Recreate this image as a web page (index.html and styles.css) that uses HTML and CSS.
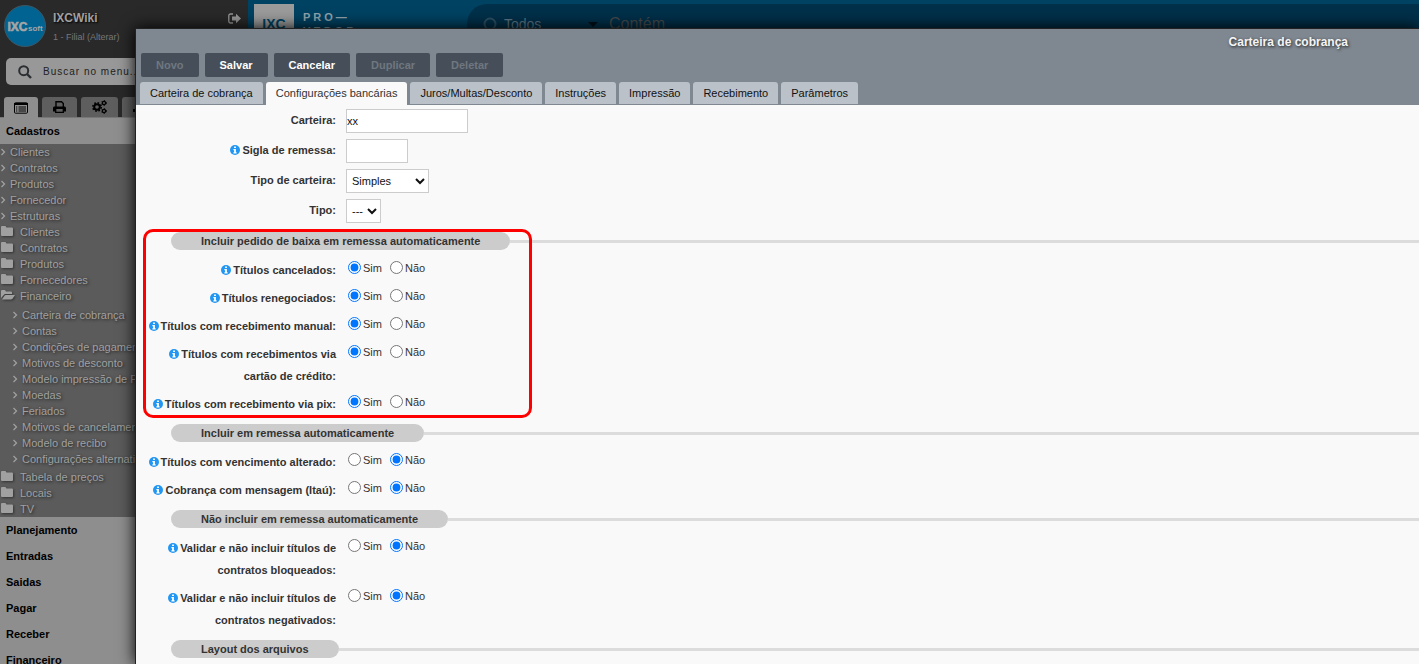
FILE: index.html
```
<!DOCTYPE html>
<html lang="pt-BR">
<head>
<meta charset="utf-8">
<title>Carteira de cobrança</title>
<link rel="stylesheet" href="styles.css">
</head>
<body>
<svg class="sprite" aria-hidden="true">
  <symbol id="chevron" viewBox="0 0 6 8"><path d="M1.5 1l3 3-3 3" fill="none" stroke="currentColor" stroke-width="1.3"/></symbol>
  <symbol id="folder" viewBox="0 0 12 10"><path d="M1 0h3.5l1 1.5H11a1 1 0 0 1 1 1V9a1 1 0 0 1-1 1H1a1 1 0 0 1-1-1V1a1 1 0 0 1 1-1z" fill="currentColor"/></symbol>
  <symbol id="folder-open" viewBox="0 0 14 10"><path d="M0 8V1a1 1 0 0 1 1-1h3l1 1.4h5a1 1 0 0 1 1 1V4H4.5a2 2 0 0 0-1.7.9zM1 9.6L3.3 6a2 2 0 0 1 1.6-1H14l-2.5 3.8a2 2 0 0 1-1.6.8z" fill="currentColor"/></symbol>
  <symbol id="info" viewBox="0 0 10 10"><circle cx="5" cy="5" r="5" fill="#2196f3"/><path d="M4.1 1.4h1.8v1.5H4.1zM3.4 4h2.5v3.2h.7v1.2H3.4V7.2h.7v-2h-.7z" fill="#fff"/></symbol>
</svg>
<div class="app">
  <aside class="sidebar">
    <div class="user">
      <svg class="avatar" viewBox="0 0 42 42" role="img" aria-label="IXCsoft"><circle cx="21" cy="21" r="20.5" fill="#006391" stroke="#3c5766"/><text x="3.500" y="26" class="avatar-main">IXC</text><text x="24" y="26" class="avatar-sub">soft</text></svg>
      <div class="user-text"><strong>IXCWiki</strong><a href="#">1 - Filial (Alterar)</a></div>
      <button class="logout" aria-label="Sair"><svg viewBox="0 0 13 11"><path d="M5 1H2.5A1.7 1.7 0 0 0 .8 2.7v5.6A1.7 1.7 0 0 0 2.500 10H5" fill="none" stroke="currentColor" stroke-width="1.3"/><path d="M4 3.600h4V.8l5 4.700-5 4.700V7.400H4z" fill="currentColor"/></svg></button>
    </div>
    <label class="menu-search">
      <svg viewBox="0 0 14 14"><circle cx="5.700" cy="5.700" r="4.500" fill="none" stroke="#2b2f33" stroke-width="2"/><path d="M9 9l4 4" stroke="#2b2f33" stroke-width="2.400"/></svg>
      <input type="text" aria-label="Buscar no menu" placeholder="Buscar no menu...">
    </label>
    <div class="side-tabs">
      <button class="side-tab side-tab-on" aria-label="Menu"><svg viewBox="0 0 14 12"><rect x=".5" y=".8" width="13" height="10.400" rx="1" fill="none" stroke="#000"/><path d="M0 1h14v2H0zM2 4.500h1.300v1H2zM4.500 4.500H12v1H4.500zM2 6.500h1.300v1H2zM4.500 6.500H12v1H4.500zM2 8.500h1.300v1H2zM4.500 8.500H12v1H4.500z"/></svg></button>
      <button class="side-tab" aria-label="Imprimir"><svg class="printer" viewBox="0 0 14 12"><path d="M3.500 6V.7h5.500l1.800 1.800V6" fill="none" stroke="#000" stroke-width="1.400"/><path d="M1.800 5.500h10.400A1.500 1.500 0 0 1 13.500 7v3.500H11V8H3v2.500H.5V7a1.500 1.500 0 0 1 1.300-1.500z"/><path d="M3.200 8v3.300h7.600V8" fill="none" stroke="#000" stroke-width="1.300"/></svg></button>
      <button class="side-tab" aria-label="Configurações"><svg class="gears" viewBox="0 0 15 14"><g fill="none" stroke="#000"><circle cx="5" cy="7" r="2.800" stroke-width="2"/><circle cx="5" cy="7" r="4.200" stroke-width="1.600" stroke-dasharray="1.700 1.600"/><circle cx="12" cy="3" r="1.600" stroke-width="1.200"/><circle cx="12" cy="3" r="2.400" stroke-width="1" stroke-dasharray="1.200 1.310"/><circle cx="12" cy="11" r="1.600" stroke-width="1.200"/><circle cx="12" cy="11" r="2.400" stroke-width="1" stroke-dasharray="1.200 1.310"/></g></svg></button>
      <button class="side-tab" aria-label="Gráficos"><svg viewBox="0 0 14 12"><path d="M1 11V8h2v3zM5 11V5h2v6zM9 11V2h2v9z"/></svg></button>
    </div>
    <nav class="menu">
      <h2>Cadastros</h2>
      <ul class="tree">
        <li><a href="#"><svg class="chev"><use href="#chevron"/></svg>Clientes</a></li>
        <li><a href="#"><svg class="chev"><use href="#chevron"/></svg>Contratos</a></li>
        <li><a href="#"><svg class="chev"><use href="#chevron"/></svg>Produtos</a></li>
        <li><a href="#"><svg class="chev"><use href="#chevron"/></svg>Fornecedor</a></li>
        <li><a href="#"><svg class="chev"><use href="#chevron"/></svg>Estruturas</a></li>
        <li><a href="#"><svg class="fold"><use href="#folder"/></svg>Clientes</a></li>
        <li><a href="#"><svg class="fold"><use href="#folder"/></svg>Contratos</a></li>
        <li><a href="#"><svg class="fold"><use href="#folder"/></svg>Produtos</a></li>
        <li><a href="#"><svg class="fold"><use href="#folder"/></svg>Fornecedores</a></li>
        <li><a href="#"><svg class="fold fold-open"><use href="#folder-open"/></svg>Financeiro</a>
          <ul class="subtree">
            <li><a href="#"><svg class="chev"><use href="#chevron"/></svg>Carteira de cobrança</a></li>
            <li><a href="#"><svg class="chev"><use href="#chevron"/></svg>Contas</a></li>
            <li><a href="#"><svg class="chev"><use href="#chevron"/></svg>Condições de pagamento</a></li>
            <li><a href="#"><svg class="chev"><use href="#chevron"/></svg>Motivos de desconto</a></li>
            <li><a href="#"><svg class="chev"><use href="#chevron"/></svg>Modelo impressão de Fatura</a></li>
            <li><a href="#"><svg class="chev"><use href="#chevron"/></svg>Moedas</a></li>
            <li><a href="#"><svg class="chev"><use href="#chevron"/></svg>Feriados</a></li>
            <li><a href="#"><svg class="chev"><use href="#chevron"/></svg>Motivos de cancelamento</a></li>
            <li><a href="#"><svg class="chev"><use href="#chevron"/></svg>Modelo de recibo</a></li>
            <li><a href="#"><svg class="chev"><use href="#chevron"/></svg>Configurações alternativas</a></li>
          </ul>
        </li>
        <li><a href="#"><svg class="fold"><use href="#folder"/></svg>Tabela de preços</a></li>
        <li><a href="#"><svg class="fold"><use href="#folder"/></svg>Locais</a></li>
        <li><a href="#"><svg class="fold"><use href="#folder"/></svg>TV</a></li>
      </ul>
      <h2>Planejamento</h2>
      <h2>Entradas</h2>
      <h2>Saidas</h2>
      <h2>Pagar</h2>
      <h2>Receber</h2>
      <h2>Financeiro</h2>
    </nav>
  </aside>
  <header class="topbar">
    <div class="brand-box">IXC</div>
    <div class="brand-name">PRO—<br>VEDOR</div>
    <div class="top-search">
      <svg class="ring" viewBox="0 0 14 14"><circle cx="7" cy="7" r="5.500" fill="none" stroke="#2c5063" stroke-width="2"/></svg>
      <span class="scope">Todos</span>
      <svg class="caret" viewBox="0 0 10 5"><path d="M0 0h10L5 5z" fill="#000f18"/></svg>
      <span class="contains">Contém</span>
    </div>
  </header>
</div>

<main class="modal">
  <div class="modal-head">
    <h1>Carteira de cobrança</h1>
    <div class="toolbar">
      <button disabled>Novo</button>
      <button>Salvar</button>
      <button>Cancelar</button>
      <button disabled>Duplicar</button>
      <button disabled>Deletar</button>
    </div>
    <div class="tabs" role="tablist">
      <button role="tab">Carteira de cobrança</button>
      <button role="tab" aria-selected="true" class="tab-on">Configurações bancárias</button>
      <button role="tab">Juros/Multas/Desconto</button>
      <button role="tab">Instruções</button>
      <button role="tab">Impressão</button>
      <button role="tab">Recebimento</button>
      <button role="tab">Parâmetros</button>
    </div>
  </div>
  <form class="form">
    <div class="row"><label class="label" for="carteira">Carteira:</label><input class="field field-m" id="carteira" type="text" value="xx"></div>
    <div class="row"><label class="label" for="sigla"><svg class="info"><use href="#info"/></svg>Sigla de remessa:</label><input class="field field-s" id="sigla" type="text"></div>
    <div class="row"><label class="label" for="tipoc">Tipo de carteira:</label><select class="field select-m" id="tipoc"><option>Simples</option></select></div>
    <div class="row"><label class="label" for="tipo">Tipo:</label><select class="field select-s" id="tipo"><option>---</option></select></div>

    <section class="group marked">
      <h2 class="legend"><span>Incluir pedido de baixa em remessa automaticamente</span></h2>
      <div class="row" role="radiogroup" aria-labelledby="l1"><span class="label" id="l1"><svg class="info"><use href="#info"/></svg>Títulos cancelados:</span><div class="radios"><label><input type="radio" name="r1" checked>Sim</label><label><input type="radio" name="r1">Não</label></div></div>
      <div class="row" role="radiogroup" aria-labelledby="l2"><span class="label" id="l2"><svg class="info"><use href="#info"/></svg>Títulos renegociados:</span><div class="radios"><label><input type="radio" name="r2" checked>Sim</label><label><input type="radio" name="r2">Não</label></div></div>
      <div class="row" role="radiogroup" aria-labelledby="l3"><span class="label" id="l3"><svg class="info"><use href="#info"/></svg>Títulos com recebimento manual:</span><div class="radios"><label><input type="radio" name="r3" checked>Sim</label><label><input type="radio" name="r3">Não</label></div></div>
      <div class="row" role="radiogroup" aria-labelledby="l4"><span class="label" id="l4"><svg class="info"><use href="#info"/></svg>Títulos com recebimentos via cartão de crédito:</span><div class="radios"><label><input type="radio" name="r4" checked>Sim</label><label><input type="radio" name="r4">Não</label></div></div>
      <div class="row" role="radiogroup" aria-labelledby="l5"><span class="label" id="l5"><svg class="info"><use href="#info"/></svg>Títulos com recebimento via pix:</span><div class="radios"><label><input type="radio" name="r5" checked>Sim</label><label><input type="radio" name="r5">Não</label></div></div>
    </section>

    <section class="group">
      <h2 class="legend"><span>Incluir em remessa automaticamente</span></h2>
      <div class="row" role="radiogroup" aria-labelledby="l6"><span class="label" id="l6"><svg class="info"><use href="#info"/></svg>Títulos com vencimento alterado:</span><div class="radios"><label><input type="radio" name="r6">Sim</label><label><input type="radio" name="r6" checked>Não</label></div></div>
      <div class="row" role="radiogroup" aria-labelledby="l7"><span class="label" id="l7"><svg class="info"><use href="#info"/></svg>Cobrança com mensagem (Itaú):</span><div class="radios"><label><input type="radio" name="r7">Sim</label><label><input type="radio" name="r7" checked>Não</label></div></div>
    </section>

    <section class="group">
      <h2 class="legend"><span>Não incluir em remessa automaticamente</span></h2>
      <div class="row" role="radiogroup" aria-labelledby="l8"><span class="label" id="l8"><svg class="info"><use href="#info"/></svg>Validar e não incluir títulos de contratos bloqueados:</span><div class="radios"><label><input type="radio" name="r8">Sim</label><label><input type="radio" name="r8" checked>Não</label></div></div>
      <div class="row" role="radiogroup" aria-labelledby="l9"><span class="label" id="l9"><svg class="info"><use href="#info"/></svg>Validar e não incluir títulos de contratos negativados:</span><div class="radios"><label><input type="radio" name="r9">Sim</label><label><input type="radio" name="r9" checked>Não</label></div></div>
    </section>

    <section class="group">
      <h2 class="legend"><span>Layout dos arquivos</span></h2>
    </section>
  </form>
</main>
</body>
</html>
```
FILE: styles.css
```
*, *::before, *::after { box-sizing: border-box; }
body {
  margin: 0;
  height: 100vh;
  overflow: hidden;
  position: relative;
  background: #8e8e8e;
  font-family: "Liberation Sans", Arial, sans-serif;
  font-size: 11px;
  color: #333;
}
button, input, select { font: inherit; }
button { border: 0; cursor: pointer; }
h1, h2, ul { margin: 0; padding: 0; }
ul { list-style: none; }
a { color: inherit; text-decoration: none; }
.sprite { display: none; }

/* Page behind the window */
.app { display: flex; height: 100%; }
.sidebar {
  flex: 0 0 248px;
  display: flex;
  flex-direction: column;
  overflow: hidden;
  background: #292929;
}
.sidebar > * { flex-shrink: 0; }
.user {
  display: flex;
  align-items: flex-start;
  gap: 7px;
  height: 58px;
  padding: 5px 7px 0 4px;
}
.avatar { width: 42px; height: 42px; }
.avatar-main { font: bold 12px "Liberation Sans", sans-serif; fill: #a5a5a5; stroke: #a5a5a5; stroke-width: .6px; }
.avatar-sub { font: bold 8px "Liberation Sans", sans-serif; fill: #a5a5a5; }
.user-text { flex: 1; display: flex; flex-direction: column; gap: 6px; padding-top: 5px; color: #a0a0a0; }
.user-text strong { font-size: 12px; line-height: 16px; text-shadow: 1px 1px 2px #000; }
.user-text a { font-size: 9px; line-height: 10px; color: #777; }
.logout { width: 13px; padding: 8px 0 0; background: none; color: #979797; }
.logout svg { display: block; width: 13px; height: 11px; }
.menu-search {
  display: flex;
  align-items: center;
  gap: 11px;
  margin: 0 6px;
  height: 27px;
  padding-left: 12px;
  border-radius: 5px;
  background: #989898;
}
.menu-search svg { width: 14px; height: 14px; }
.menu-search input { flex: 1; min-width: 0; padding: 0; border: 0; background: none; font-size: 10px; letter-spacing: 1px; }
.menu-search input::placeholder { color: #222; }
.side-tabs { display: flex; gap: 4px; margin-top: 12px; padding-left: 4px; border-bottom: 1px solid #777; }
.side-tab {
  display: flex;
  align-items: center;
  height: 20px;
  padding: 0 10px;
  border-radius: 3px 3px 0 0;
  background: #5e5e5e;
}
.side-tab-on { background: #8e8e8e; height: 21px; margin-bottom: -1px; }
.side-tab svg { width: 14px; height: 12px; }
.side-tab .printer { width: 15px; }
.side-tab .gears { width: 17px; height: 14px; }
.menu { flex-grow: 1; background: #8e8e8e; }
.menu h2 { padding-left: 6px; font-size: 11px; line-height: 26px; color: #000; }
.tree { background: #5b5b5b; color: #a0a0a0; }
.tree a { display: flex; align-items: center; height: 16px; white-space: nowrap; text-shadow: 1px 1px 3px #222; }
.chev { width: 6px; height: 8px; margin-right: 4px; }
.fold { width: 12px; height: 10px; margin: 0 7px 2px 1px; filter: drop-shadow(1px 1px 1px #333); }
.fold-open { width: 14px; margin-right: 5px; }
.subtree { padding: 3px 0 2px 12px; }
.topbar { flex: 1; display: flex; align-items: flex-start; height: 48px; padding: 4px 0 0 6px; background: #004262; }
.brand-box { width: 40px; height: 40px; background: #9b9b9b; color: #004262; font-weight: bold; font-size: 14px; line-height: 40px; text-align: center; }
.brand-name { width: 173px; padding: 6px 0 0 9px; color: #8fa3ad; font-size: 11px; line-height: 14px; font-weight: bold; letter-spacing: 3px; }
.top-search { flex: 1; display: flex; align-items: center; height: 40px; padding-left: 16px; border-radius: 20px 0 0 20px; background: #00304a; }
.ring { width: 14px; height: 14px; margin-right: 7px; }
.scope { width: 84px; font-size: 14px; color: #5c7684; }
.caret { width: 10px; height: 5px; margin-right: 11px; }
.contains { font-size: 16px; color: #47494b; }

/* Window */
.modal {
  position: absolute;
  inset: 28px 0 0 135px;
  overflow: hidden;
  border: solid #222;
  border-width: 1px 0 0 1px;
  background: #f9f9f9;
  box-shadow: 0 0 15px #000;
}
.modal-head { background: #7f8790; }
.modal-head h1 {
  padding: 5px 71px 3px 0;
  text-align: right;
  font-size: 12px;
  line-height: 16px;
  color: #f4f4f4;
  text-shadow: 1px 1px 3px #222;
}
.toolbar { display: flex; gap: 6px; padding-left: 5px; }
.toolbar button {
  height: 24px;
  padding: 0 15px;
  border-radius: 2px;
  background: #464f59;
  color: #fff;
  font-weight: bold;
}
.toolbar button:disabled { color: #6f7780; }
.tabs { display: flex; align-items: flex-start; gap: 3px; padding: 5px 0 0 4px; }
.tabs button {
  height: 22px;
  margin-bottom: 1px;
  padding: 0 10px;
  border-radius: 3px 3px 0 0;
  background: #bbc1c9;
  color: #111;
}
.tabs .tab-on { height: 23px; margin-bottom: 0; padding-bottom: 1px; background: #f9f9f9; color: #333; }

/* Form */
.form { padding-top: 4px; }
.row { display: flex; align-items: flex-start; gap: 10px; margin-bottom: 6px; }
.label { width: 200px; padding-left: 10px; text-align: right; font-weight: bold; line-height: 22px; }
.info { width: 10px; height: 10px; margin-right: 2px; vertical-align: -1px; }
.field { height: 24px; padding: 0; border: 1px solid #ccc; border-radius: 0; background: #fff; color: #111; }
.field-m { width: 122px; }
.field-s { width: 62px; }
.select-m { width: 83px; padding-left: 1px; }
.select-s { width: 35px; padding-left: 1px; }
.radios { display: flex; gap: 8px; padding-left: 2px; }
.radios label { display: flex; align-items: center; gap: 2px; line-height: 18px; }
.radios input { width: 13px; height: 13px; margin: 0 0 2px; }
.group { display: flow-root; padding-top: 3px; }
.legend { display: flex; align-items: center; margin: 0 0 9px 35px; font-size: 11px; line-height: 18px; }
.legend span { padding: 0 30px; border-radius: 9px; background: #ccc; }
.legend::after { content: ""; flex: 1; height: 3px; background: #dcdcdc; }
.marked { position: relative; }
.marked::after {
  content: "";
  position: absolute;
  inset: 0 auto 3px 7px;
  width: 389px;
  border: 3px solid #f00;
  border-radius: 10px;
  pointer-events: none;
}
```
